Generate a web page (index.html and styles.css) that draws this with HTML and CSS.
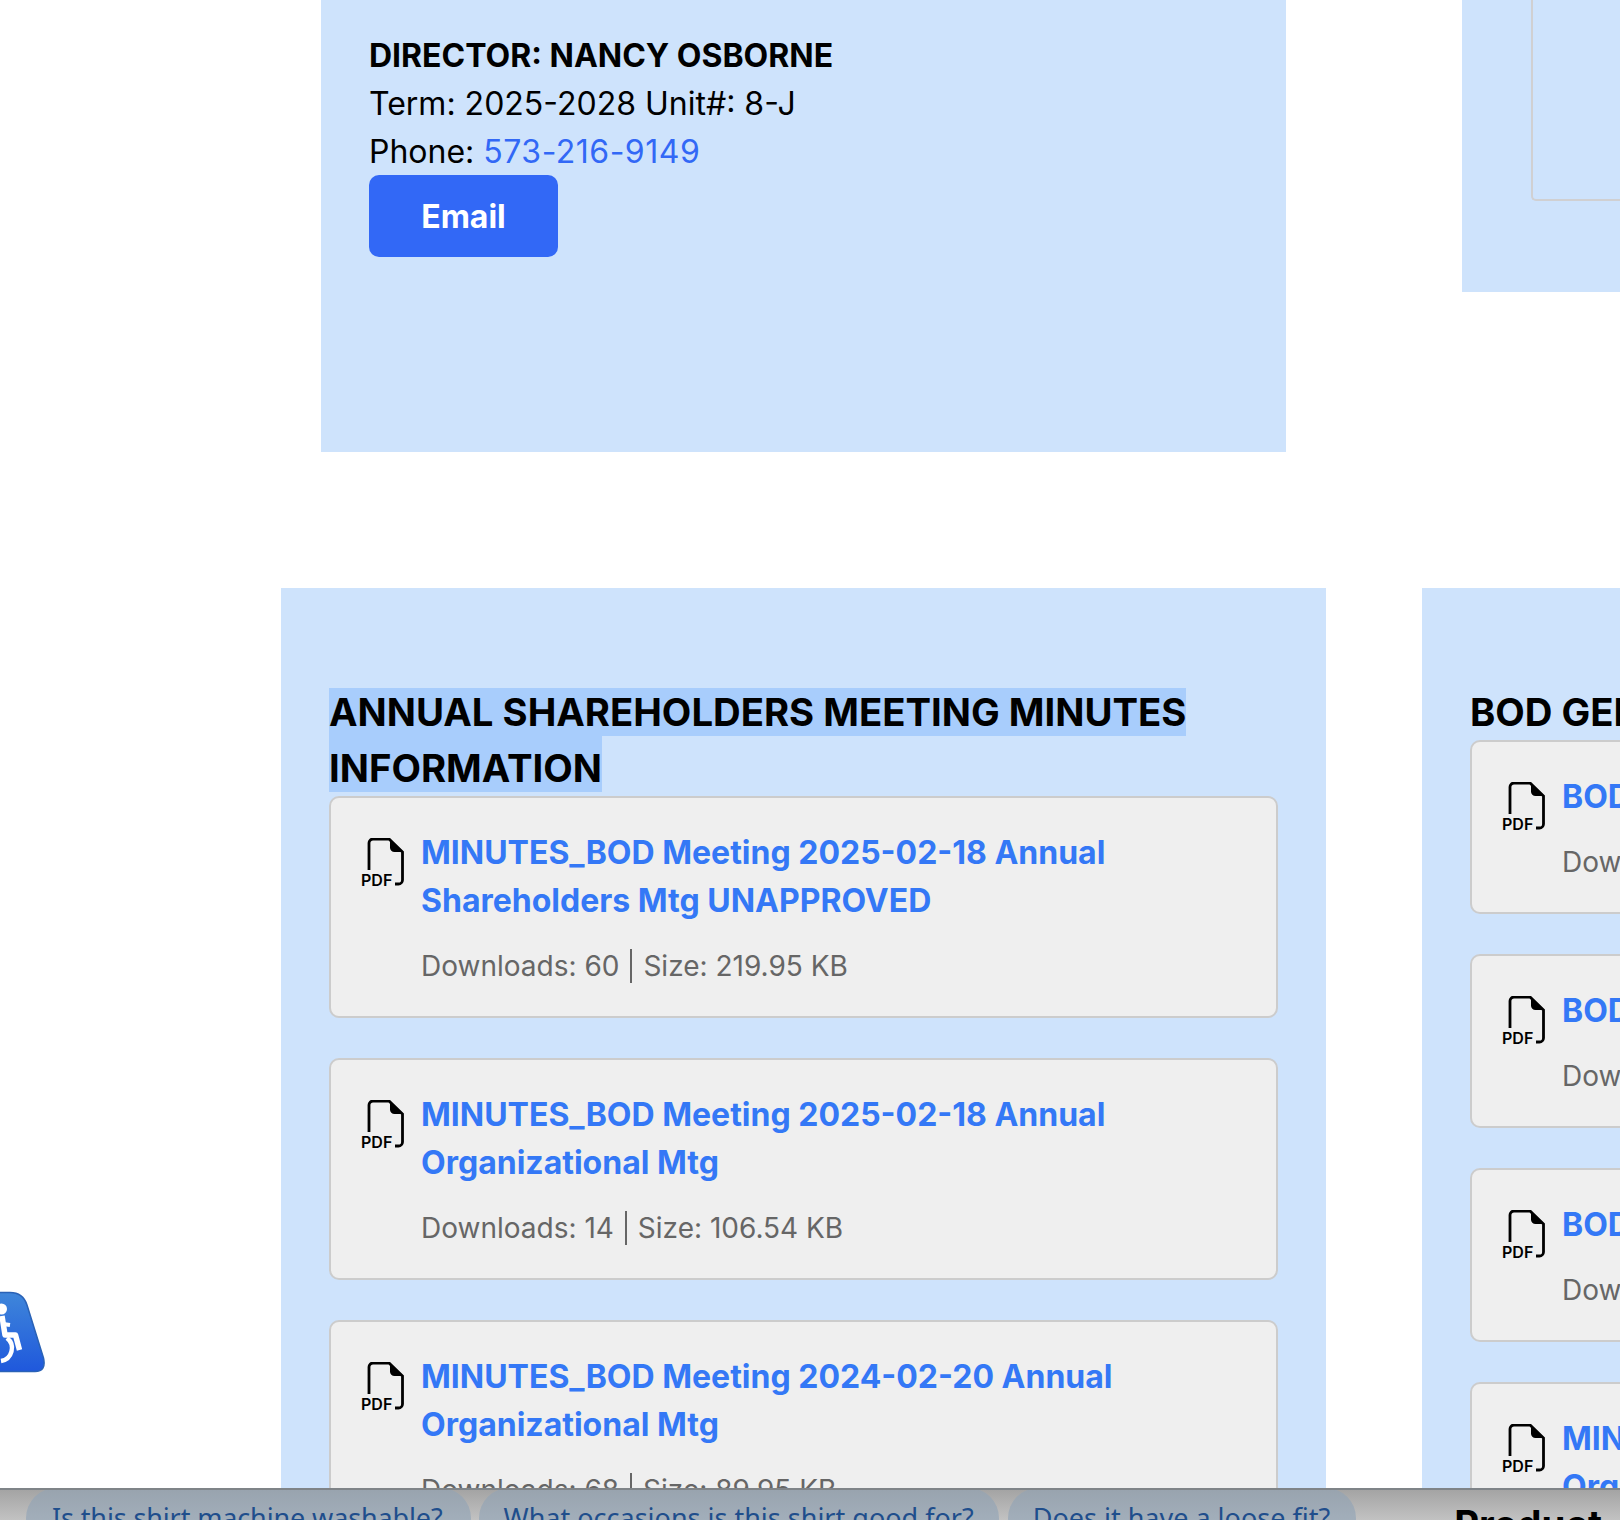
FILE: index.html
```html
<!DOCTYPE html>
<html lang="en">
<head>
<meta charset="utf-8">
<title>Documents</title>
<link rel="stylesheet" href="styles.css">
</head>
<body>
<svg class="defs" width="0" height="0" aria-hidden="true">
  <symbol id="pdf" viewBox="0 0 42 48">
    <path d="M7 32V5a4 4 0 0 1 4-4H27L40.500 14V42a4 4 0 0 1-4 4H33" fill="none" stroke="#000" stroke-width="2.800"/>
    <path d="M28 0.500L41.500 14H32.500a4.500 4.500 0 0 1-4.500-4.500z" fill="#000"/>
  </symbol>
</svg>
<div class="viewport">
  <div class="row row-top">
    <section class="panel panel-director">
      <p class="name">DIRECTOR: NANCY OSBORNE</p>
      <p class="line">Term: 2025-2028 Unit#: 8-J</p>
      <p class="line">Phone: <a class="phone" href="#">573-216-9149</a></p>
      <a class="btn" href="#">Email</a>
    </section>
    <section class="panel panel-side"><div class="side-box"></div></section>
  </div>
  <div class="row row-docs">
    <section class="panel panel-docs">
      <h2 class="title title-l"><span class="sel sel-1">ANNUAL SHAREHOLDERS MEETING MINUTES</span> <span class="sel sel-2">INFORMATION</span></h2>
      <article class="doc">
        <div class="pdf"><svg class="pdf-svg"><use href="#pdf"/></svg><span class="pdf-t">PDF</span></div>
        <div class="doc-body">
          <a class="doc-link" href="#">MINUTES_BOD Meeting 2025-02-18 Annual Shareholders Mtg UNAPPROVED</a>
          <p class="meta"><span>Downloads: 60</span><span class="sep">Size: 219.95 KB</span></p>
        </div>
      </article>
      <article class="doc">
        <div class="pdf"><svg class="pdf-svg"><use href="#pdf"/></svg><span class="pdf-t">PDF</span></div>
        <div class="doc-body">
          <a class="doc-link" href="#">MINUTES_BOD Meeting 2025-02-18 Annual Organizational Mtg</a>
          <p class="meta"><span>Downloads: 14</span><span class="sep">Size: 106.54 KB</span></p>
        </div>
      </article>
      <article class="doc">
        <div class="pdf"><svg class="pdf-svg"><use href="#pdf"/></svg><span class="pdf-t">PDF</span></div>
        <div class="doc-body">
          <a class="doc-link" href="#">MINUTES_BOD Meeting 2024-02-20 Annual Organizational Mtg</a>
          <p class="meta"><span>Downloads: 68</span><span class="sep">Size: 89.95 KB</span></p>
        </div>
      </article>
    </section>
    <section class="panel panel-docs-r">
      <h2 class="title title-r">BOD GENERAL</h2>
      <article class="doc doc-r">
        <div class="pdf"><svg class="pdf-svg"><use href="#pdf"/></svg><span class="pdf-t">PDF</span></div>
        <div class="doc-body"><a class="doc-link" href="#">BOD</a><p class="meta"><span>Downloads</span></p></div>
      </article>
      <article class="doc doc-r">
        <div class="pdf"><svg class="pdf-svg"><use href="#pdf"/></svg><span class="pdf-t">PDF</span></div>
        <div class="doc-body"><a class="doc-link" href="#">BOD</a><p class="meta"><span>Downloads</span></p></div>
      </article>
      <article class="doc doc-r">
        <div class="pdf"><svg class="pdf-svg"><use href="#pdf"/></svg><span class="pdf-t">PDF</span></div>
        <div class="doc-body"><a class="doc-link" href="#">BOD</a><p class="meta"><span>Downloads</span></p></div>
      </article>
      <article class="doc doc-r">
        <div class="pdf"><svg class="pdf-svg"><use href="#pdf"/></svg><span class="pdf-t">PDF</span></div>
        <div class="doc-body"><a class="doc-link" href="#">MINUTES</a><br><a class="doc-link" href="#">Organizational</a></div>
      </article>
    </section>
  </div>
  <div class="a11y">
    <svg class="a11y-icon" viewBox="0 0 46 82" aria-hidden="true">
      <defs><linearGradient id="ag" x1="0" y1="0" x2="0" y2="1"><stop offset="0" stop-color="#3f86da"/><stop offset="1" stop-color="#1f58dc"/></linearGradient></defs>
      <path d="M-20 1.500H10Q23 1.500 27 14L43.500 67Q46.500 80.500 35 80.500H-20z" fill="url(#ag)" stroke="#2a62b6" stroke-width="1.500"/>
      <circle cx="1.500" cy="18" r="5.500" fill="#fff"/>
      <path d="M2 25L5 44H15.500L19.500 59" fill="none" stroke="#fff" stroke-width="5.500" stroke-linejoin="round"/>
      <path d="M3 33L10 34" fill="none" stroke="#fff" stroke-width="4"/>
      <path d="M7 47A13 13 0 0 1 1 70" fill="none" stroke="#fff" stroke-width="4.500"/>
    </svg>
  </div>
</div>
<footer class="bar">
  <a class="pill pill-1" href="#">Is this shirt machine washable?</a>
  <a class="pill pill-2" href="#">What occasions is this shirt good for?</a>
  <a class="pill pill-3" href="#">Does it have a loose fit?</a>
  <strong class="bar-title">Product</strong>
</footer>
</body>
</html>
```
FILE: styles.css
```css
* { box-sizing: border-box; }
html, body { margin: 0; height: 1520px; overflow: hidden; background: #fff; }
body { font-family: Inter, "Liberation Sans", sans-serif; color: #000; position: relative; }
.defs { position: absolute; }
.viewport { height: 1488px; overflow: hidden; position: relative; background: #fff; }
.row { display: flex; }
.row-top { height: 588px; align-items: flex-start; padding-left: 321px; }
.panel { background: #cee3fc; }
.panel-director { width: 965px; height: 452px; padding: 32px 48px 0; }
.name, .line { margin: 0; line-height: 48px; font-size: 32px; }
.name { font-weight: 700; }
.phone { color: #3268f6; text-decoration: none; letter-spacing: .5px; }
.btn { display: inline-flex; align-items: center; justify-content: center; width: 189px; height: 82px; margin-top: -1px; background: #3268f6; color: #fff; font-weight: 700; font-size: 32px; border-radius: 10px; text-decoration: none; }
.panel-side { width: 158px; height: 292px; margin-left: 176px; padding-left: 69px; flex: none; }
.side-box { width: 200px; height: 201px; border: 2px solid #d0d0d2; border-top: 0; border-right: 0; border-radius: 0 0 0 5px; }
.row-docs { padding-left: 281px; gap: 96px; }
.panel-docs { width: 1045px; flex: none; height: 900px; padding: 96px 48px 0; }
.panel-docs-r { flex: none; width: 300px; height: 900px; padding: 96px 0 0 48px; }
.title { margin: 0; font-size: 38.300px; line-height: 56px; font-weight: 700; }
.title-l { height: 112px; padding-top: 4px; }
.title-r { white-space: nowrap; height: 56px; }
.sel { display: block; width: fit-content; background: #a8cdfc; line-height: 48px; }
.sel-1 { height: 48px; }
.sel-2 { height: 56px; padding-top: 8px; }
.doc { display: flex; width: 949px; height: 222px; background: #efefef; border: 2px solid #cccccc; border-radius: 10px; margin-bottom: 40px; padding: 31px 30px 0; }
.doc-r { height: 174px; width: 400px; }
.pdf { position: relative; width: 42px; height: 48px; margin: 9px 17px 0 1px; flex: none; }
.pdf-svg { width: 42px; height: 48px; display: block; }
.pdf-t { position: absolute; left: -1px; top: 33px; font-size: 16px; line-height: 18px; font-weight: 600; }
.doc-body { width: 700px; flex: none; }
.doc-link { color: #3478f6; font-size: 32px; line-height: 48px; font-weight: 700; text-decoration: none; }
.meta { margin: 17px 0 0; font-size: 28px; line-height: 48px; color: #666; display: flex; }
.sep { border-left: 2px solid #666; margin-left: 11px; padding-left: 11px; line-height: 34px; height: 34px; margin-top: 7px; }
.a11y { position: absolute; left: 0; top: 1291px; width: 46px; height: 82px; }
.a11y-icon { display: block; width: 46px; height: 82px; }
.bar { position: absolute; left: 0; right: 0; top: 1488px; height: 32px; border-top: 2px solid #7f8488; background: linear-gradient(#a4a4a4, #c2c2c2); overflow: hidden; display: flex; align-items: flex-start; padding-left: 26px; }
.pill { display: block; height: 60px; margin-top: -2px; border-radius: 36px; background: linear-gradient(#98a3ae, #abb8c5); color: #1f4e8c; font-size: 27px; line-height: 60px; padding: 0 25px; margin-right: 8px; text-decoration: none; font-family: "Noto Sans", sans-serif; white-space: nowrap; }
.pill-1 { letter-spacing: -.13px; padding: 0 28px 0 26px; }
.pill-2 { margin-right: 9px; }
.pill-3 { padding-right: 26px; }
.bar-title { font-size: 38.400px; line-height: 60px; margin-left: 90px; margin-top: 4px; }
```
